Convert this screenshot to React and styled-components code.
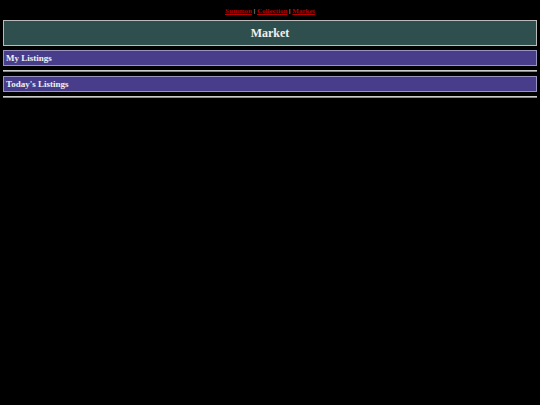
import React from 'react'
import styled, { createGlobalStyle } from 'styled-components'

const GlobalStyle = createGlobalStyle`
    html, body {
        margin: 0;
        background: #000;
    }
    body {
        padding: 3px;
        font-family: "Liberation Serif", "Times New Roman", serif;
        color: #eee;
    }
`

const Nav = styled.nav`
    height: 17px;
    line-height: 17px;
    text-align: center;
    font-size: 7px;
    font-weight: 700;
    color: #ccc;
    white-space: pre;
`

const NavLink = styled.a`
    color: #b00;
    text-decoration: underline;
`

const Header = styled.header`
    display: flex;
    align-items: center;
    justify-content: center;
    height: 24px;
    background: #2f4f4f;
    border: 1px solid #bbb;
    font-size: 12px;
    font-weight: 700;
    color: #f0f0f0;
`

const Section = styled.section`
    display: flex;
    flex-direction: column;
    gap: 4px;
    margin-top: 4px;
`

const SectionBar = styled.div`
    display: flex;
    align-items: center;
    height: 14px;
    padding: 0 2px;
    background: #483d8b;
    border: 1px solid #9a93c0;
    font-size: 9px;
    font-weight: 700;
    color: #f0f0f0;
`

const SectionBody = styled.div`
    height: 0;
    border-top: 1px solid #ccc;
    border-bottom: 1px solid #888;
`

const links = ['Summon', 'Collection', 'Market']

const App = () => {
    return (
        <>
            <GlobalStyle />
            <Nav>
                {links.map((l, i) => (
                    <React.Fragment key={l}>
                        {i > 0 && ' | '}
                        <NavLink href="#">{l}</NavLink>
                    </React.Fragment>
                ))}
            </Nav>
            <Header>Market</Header>
            <Section>
                <SectionBar>My Listings</SectionBar>
                <SectionBody />
            </Section>
            <Section>
                <SectionBar>Today's Listings</SectionBar>
                <SectionBody />
            </Section>
        </>
    )
}

export default App
